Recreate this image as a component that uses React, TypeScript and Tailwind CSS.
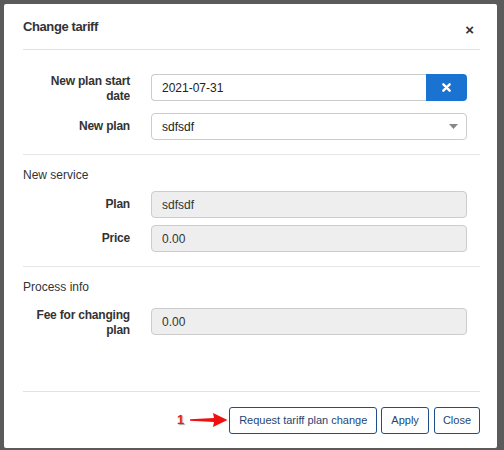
import { ReactNode } from 'react'

function Row({
  label,
  children,
  className = '',
  top = false,
}: {
  label: ReactNode
  children: ReactNode
  className?: string
  top?: boolean
}) {
  return (
    <div className={`flex ${top ? 'items-start' : 'items-center'} ${className}`}>
      <div className="w-[107px] shrink-0 text-right text-[12px] font-bold leading-[15px] tracking-[-0.2px] text-[#333]">
        {label}
      </div>
      <div className="ml-[21px] w-[316px]">{children}</div>
    </div>
  )
}

function ReadOnly({ value }: { value: string }) {
  return (
    <div className="flex h-[27px] items-center rounded-[4px] border border-[#ccc] bg-[#eee] px-[10px] text-[12px] text-[#333]">
      {value}
    </div>
  )
}

export default function App() {
  return (
    <div
      className="h-[450px] w-[504px] bg-[#5b5b5b] pl-[4px] pt-[4px]"
      style={{ fontFamily: '"Liberation Sans", Arial, sans-serif' }}
    >
      <div className="flex h-[444px] w-[493px] flex-col rounded-[2px] bg-white pl-[19px] pr-[17px]">
        <div className="flex h-[46px] items-center justify-between border-b border-[#e2e2e2] pt-[1px]">
          <span className="text-[13px] font-bold tracking-[-0.4px] text-[#333]">Change tariff</span>
          <span className="mr-[6px] mt-[5px] text-[15px] font-bold leading-none text-[#333]">×</span>
        </div>

        <Row label={<>New plan start<br />date</>} className="mt-[24px]" top>
          <div className="flex h-[27px]">
            <div className="flex flex-1 items-center rounded-l-[4px] border border-r-0 border-[#ccc] px-[10px] text-[12px] text-[#222]">
              2021-07-31
            </div>
            <div className="flex w-[41px] items-center justify-center rounded-r-[4px] bg-[#1a73d1]">
              <svg width="9" height="9" viewBox="0 0 10 10">
                <path d="M1.5 1.5 L8.5 8.5 M8.5 1.5 L1.5 8.5" stroke="white" strokeWidth="2.6" strokeLinecap="round" />
              </svg>
            </div>
          </div>
        </Row>
        <Row label="New plan" className="mt-[9px]">
          <div className="flex h-[27px] items-center justify-between rounded-[4px] border border-[#ccc] pl-[10px] pr-[8px] text-[12px] text-[#222]">
            <span>sdfsdf</span>
            <svg width="9" height="5" viewBox="0 0 9 5">
              <path d="M0 0 H9 L4.5 5 Z" fill="#888" />
            </svg>
          </div>
        </Row>

        <div className="mt-[14px] border-t border-[#e5e5e5]" />
        <div className="mt-[12px] text-[12px] leading-[16px] text-[#333]">New service</div>
        <Row label="Plan" className="mt-[8px]">
          <ReadOnly value="sdfsdf" />
        </Row>
        <Row label="Price" className="mt-[7px]">
          <ReadOnly value="0.00" />
        </Row>

        <div className="mt-[14px] border-t border-[#e5e5e5]" />
        <div className="mt-[12px] text-[12px] leading-[16px] text-[#333]">Process info</div>
        <Row label={<>Fee for changing<br />plan</>} className="mt-[13px]" top>
          <ReadOnly value="0.00" />
        </Row>

        <div className="mt-auto border-t border-[#e2e2e2]" />
        <div className="flex h-[56px] items-center justify-end">
          <div className="mr-[1px] flex items-center">
            <span
              className="text-[13px] font-bold text-[#e02020]"
              style={{ textShadow: '0 0 1px #fff, 1px 1px 1px #999' }}
            >
              1
            </span>
            <svg width="38" height="16" viewBox="0 0 38 16" className="ml-[6px]">
              <path d="M0 7.2 L24 6 L23 1 L37.5 8 L23 15 L24 10 L0 8.8 Z" fill="#f01010" />
            </svg>
          </div>
          <button className="h-[27px] rounded-[3px] border border-[#1f4f87] px-[9px] text-[11px] text-[#1c4676]">
            Request tariff plan change
          </button>
          <button className="ml-[4px] h-[27px] rounded-[3px] border border-[#1f4f87] px-[9px] text-[11px] text-[#1c4676]">
            Apply
          </button>
          <button className="ml-[5px] h-[27px] rounded-[3px] border border-[#1f4f87] px-[8px] text-[11px] text-[#1c4676]">
            Close
          </button>
        </div>
      </div>
    </div>
  )
}
